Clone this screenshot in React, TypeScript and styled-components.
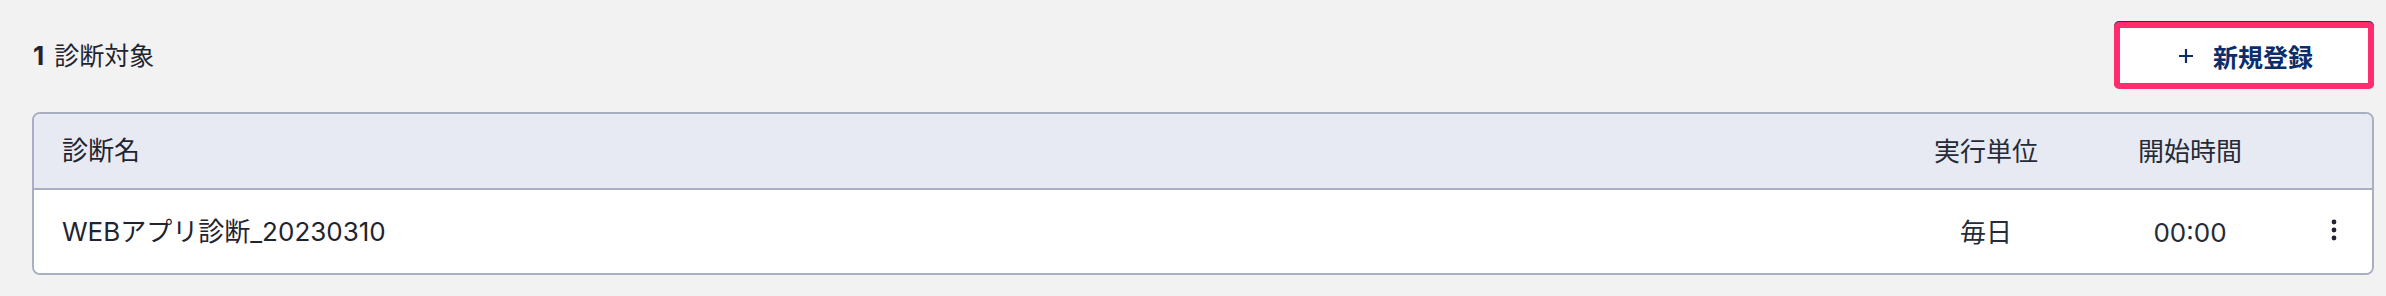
import React from 'react'
import styled, { createGlobalStyle } from 'styled-components'

const GlobalStyle = createGlobalStyle`
  html, body {
    margin: 0;
    padding: 0;
    background: #f2f2f2;
  }
  body {
    font-family: Inter, "Noto Sans CJK JP", sans-serif;
    color: #1f2430;
  }
`

const Page = styled.div`
  width: 2386px;
  height: 296px;
  box-sizing: border-box;
  padding: 22px 12px 0 32px;
`

const Toolbar = styled.div`
  display: flex;
  align-items: center;
  justify-content: space-between;
  height: 67px;
  margin-bottom: 23px;
`

const Count = styled.div`
  font-size: 25px;
  line-height: 1;
  padding-left: 1px;

  strong {
    font-weight: 700;
    font-size: 26px;
    margin-right: 10px;
  }
`

const AddButton = styled.button`
  display: flex;
  align-items: center;
  justify-content: center;
  gap: 20px;
  width: 260px;
  height: 67px;
  box-sizing: border-box;
  background: #ffffff;
  border: 6px solid #ff2d6e;
  border-radius: 5px;
  box-shadow: 0 -1px 0 #2a2f5e;
  color: #0b2d6b;
  font-family: Inter, "Noto Sans CJK JP", sans-serif;
  font-size: 25px;
  font-weight: 700;
  padding: 0 0 0 4px;
  cursor: pointer;
`

const Table = styled.div`
  width: 2342px;
  box-sizing: border-box;
  border: 2px solid #a9aec0;
  border-radius: 8px;
  overflow: hidden;
  background: #ffffff;
`

const Row = styled.div<{ $head?: boolean }>`
  display: grid;
  grid-template-columns: 1fr 204px 204px 80px;
  align-items: center;
  height: ${(p) => (p.$head ? '74px' : '83px')};
  background: ${(p) => (p.$head ? '#e7eaf3' : '#ffffff')};
  border-bottom: ${(p) => (p.$head ? '2px solid #a9aec0' : 'none')};
  font-size: 26px;
  line-height: 1;
`

const Cell = styled.div<{ $center?: boolean }>`
  padding-left: ${(p) => (p.$center ? '0' : '28px')};
  text-align: ${(p) => (p.$center ? 'center' : 'left')};
  color: ${(p) => (p.$center ? '#262b36' : '#1f2430')};
  margin-top: ${(p) => (p.$center ? '2px' : '0')};
`

const Kebab = styled.div`
  display: flex;
  justify-content: center;
  margin-top: -4px;
  margin-left: 4px;
`

const PlusIcon = () => (
  <svg width="14" height="14" viewBox="0 0 14 14">
    <path d="M7 0v14M0 7h14" stroke="#0b2d6b" strokeWidth="2.2" />
  </svg>
)

const DotsIcon = () => (
  <svg width="6" height="22" viewBox="0 0 6 22">
    <circle cx="3" cy="3" r="2.4" fill="#1f2430" />
    <circle cx="3" cy="11" r="2.4" fill="#1f2430" />
    <circle cx="3" cy="19" r="2.4" fill="#1f2430" />
  </svg>
)

export default function App() {
  return (
    <>
      <GlobalStyle />
      <Page>
        <Toolbar>
          <Count>
            <strong>1</strong>診断対象
          </Count>
          <AddButton>
            <PlusIcon />
            <span>新規登録</span>
          </AddButton>
        </Toolbar>
        <Table>
          <Row $head>
            <Cell>診断名</Cell>
            <Cell $center>実行単位</Cell>
            <Cell $center>開始時間</Cell>
            <Cell />
          </Row>
          <Row>
            <Cell>WEBアプリ診断_20230310</Cell>
            <Cell $center>毎日</Cell>
            <Cell $center>00:00</Cell>
            <Kebab>
              <DotsIcon />
            </Kebab>
          </Row>
        </Table>
      </Page>
    </>
  )
}
